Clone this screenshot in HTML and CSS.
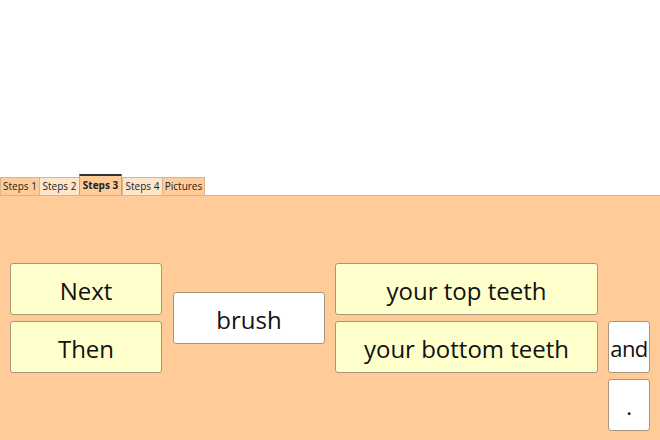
FILE: index.html
```html
<!DOCTYPE html>
<html>
<head>
<meta charset="utf-8">
<link rel="stylesheet" href="styles.css">
</head>
<body>
<div class="top"></div>
<div class="tabs">
  <div class="tab dark w1">Steps 1</div>
  <div class="tab light w2">Steps 2</div>
  <div class="tab active w3">Steps 3</div>
  <div class="tab light w4">Steps 4</div>
  <div class="tab dark w5">Pictures</div>
</div>
<div class="panel">
  <div class="grid">
    <div class="card yellow c1 r1">Next</div>
    <div class="card yellow c1 r2">Then</div>
    <div class="card white c2 brush">brush</div>
    <div class="card yellow c3 r1">your top teeth</div>
    <div class="card yellow c3 r2">your bottom teeth</div>
    <div class="card white c4 r2 small">and</div>
    <div class="card white c4 r3 small">.</div>
  </div>
</div>
</body>
</html>
```
FILE: styles.css
```css
html, body {
  margin: 0;
  padding: 0;
  width: 660px;
  height: 440px;
  overflow: hidden;
  background: #ffffff;
}
.top {
  height: 174px;
}
.tabs {
  display: flex;
  align-items: flex-end;
  height: 21px;
  font-family: "Open Sans", "Noto Sans", sans-serif;
  font-size: 10px;
  color: #222;
}
.tab {
  border: 1px solid #d9b48a;
  border-bottom: none;
  box-sizing: border-box;
  height: 18px;
  line-height: 17px;
  text-align: center;
  white-space: nowrap;
  margin-right: -1px;
}
.w1 { width: 40px; }
.w2 { width: 41px; }
.w3 { width: 43px; margin-right: 0; }
.w4 { width: 41px; }
.w5 { width: 43px; }
.tab.dark { background: #ffcc99; }
.tab.light { background: #fde6cc; }
.tab.active {
  background: #ffcc99;
  height: 21px;
  line-height: 19px;
  font-weight: bold;
  border-top: 2px solid #333;
  border-left: 1px solid #c9a47a;
  border-right: 1px solid #c9a47a;
}
.panel {
  background: #ffcc99;
  border-top: 1px solid #d9b48a;
  height: 245px;
  box-sizing: border-box;
  padding: 67px 0 0 10px;
}
.grid {
  display: grid;
  grid-template-columns: 153px 152px 263px 42px;
  grid-template-rows: 52px 52px 52px;
  column-gap: 10px;
  row-gap: 6px;
}
.card {
  box-sizing: border-box;
  border: 1px solid #a8967a;
  border-radius: 3px;
  display: flex;
  align-items: center;
  justify-content: center;
  font-family: "Open Sans", "Noto Sans", sans-serif;
  font-size: 24px;
  color: #111;
  padding-top: 2px;
}
.yellow { background: #ffffcc; }
.white { background: #ffffff; }
.c1 { grid-column: 1; margin-right: 1px; }
.c2 { grid-column: 2; }
.c3 { grid-column: 3; }
.c4 { grid-column: 4; }
.r1 { grid-row: 1; }
.r2 { grid-row: 2; }
.r3 { grid-row: 3; }
.brush {
  grid-row: 1 / 3;
  align-self: center;
  height: 52px;
}
.small {
  font-size: 22px;
  letter-spacing: -0.5px;
}
```
